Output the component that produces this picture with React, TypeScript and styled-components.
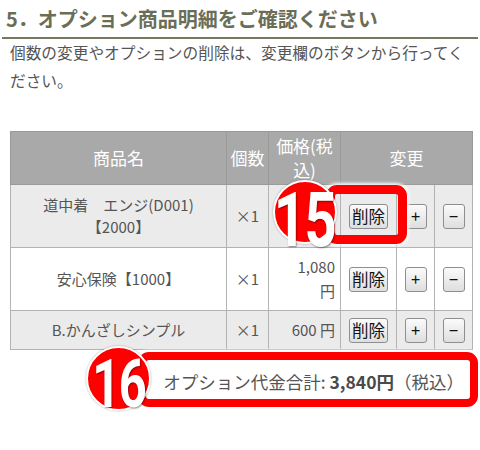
import React from "react";
import styled, { createGlobalStyle } from "styled-components";

const Global = createGlobalStyle`
  html, body { margin: 0; padding: 0; background: #fff; }
  body { font-family: "Noto Sans CJK JP", "Noto Sans", sans-serif; color: #555; }
`;

const Page = styled.div`
  position: relative;
  width: 480px;
  height: 450px;
  overflow: hidden;
`;

const Heading = styled.h2`
  margin: 0 2px;
  padding: 6px 0 5px 4px;
  font-size: 20px;
  line-height: 26px;
  font-weight: 700;
  color: #6b6e56;
  border-bottom: 2px solid #77795f;
`;

const Lead = styled.p`
  margin: 0 10px;
  font-size: 15.7px;
  line-height: 28px;
  color: #555;
`;

const Table = styled.table`
  margin: 36px 0 0 10px;
  width: 462px;
  border-collapse: collapse;
  table-layout: fixed;
  font-size: 15px;
  color: #555;
`;

const Col = styled.col<{ $w: number }>`
  width: ${(p) => p.$w}px;
`;

const Row = styled.tr<{ $h: number; $shade?: boolean }>`
  height: ${(p) => p.$h}px;
  background: ${(p) => (p.$shade ? "#ebebeb" : "#fff")};
`;

const Th = styled.th`
  background: #a9a9a9;
  color: #fff;
  font-weight: 400;
  font-size: 17px;
  line-height: 24px;
  border: 1px solid #9a9a9a;
  padding: 2px 0;
  text-align: center;
`;

const Td = styled.td<{ $align?: "center" | "right"; $lh?: number }>`
  border: 1px solid #b3b3b3;
  padding: 4px ${(p) => (p.$align === "right" ? 5 : 2)}px;
  text-align: ${(p) => p.$align || "center"};
  line-height: ${(p) => p.$lh || 22}px;
  vertical-align: middle;
`;

const Btn = styled.button`
  font-family: "Noto Sans CJK JP", sans-serif;
  font-size: 16.5px;
  line-height: 23px;
  color: #111;
  padding: 0 2px;
  min-width: 22px;
  white-space: nowrap;
  border: 1px solid #8e8e8e;
  border-radius: 3px;
  background: linear-gradient(#fbfbfb, #dedede);
  cursor: pointer;
`;

const Total = styled.div`
  margin-top: 20px;
  padding-right: 16px;
  text-align: right;
  font-size: 17.5px;
  line-height: 24px;
  color: #555;
  strong { font-weight: 700; color: #4a4a4a; }
`;

const Frame = styled.div<{ $x: number; $y: number; $w: number; $h: number; $b: number }>`
  position: absolute;
  left: ${(p) => p.$x}px;
  top: ${(p) => p.$y}px;
  width: ${(p) => p.$w}px;
  height: ${(p) => p.$h}px;
  box-sizing: border-box;
  border: ${(p) => p.$b}px solid #ff0000;
  border-radius: 11px;
  box-shadow: 0 0 3px 2px rgba(255, 255, 255, 0.9);
  pointer-events: none;
`;

const Badge = styled.div<{ $x: number; $y: number; $d: number; $fs: number }>`
  position: absolute;
  left: ${(p) => p.$x}px;
  top: ${(p) => p.$y}px;
  width: ${(p) => p.$d}px;
  height: ${(p) => p.$d}px;
  box-sizing: border-box;
  border-radius: 50%;
  background: #ff0000;
  border: 2px solid #fff;
  box-shadow: 0 0 2px rgba(0, 0, 0, 0.35);
  display: flex;
  align-items: center;
  justify-content: center;
  span {
    display: block;
    font-family: Roboto, "Liberation Sans", sans-serif;
    font-weight: 700;
    font-size: ${(p) => p.$fs}px;
    line-height: 0.74;
    color: #fff;
    letter-spacing: -2px;
    transform: scaleX(0.74) translateY(${(p) => Math.round(p.$fs * 0.1)}px);
    text-shadow: 1px 1px 2px rgba(0, 0, 0, 0.45);
  }
`;

export default function App() {
  return (
    <>
      <Global />
      <Page>
        <Heading>5．オプション商品明細をご確認ください</Heading>
        <Lead>個数の変更やオプションの削除は、変更欄のボタンから行ってください。</Lead>
        <Table>
          <colgroup>
            <Col $w={216} />
            <Col $w={42} />
            <Col $w={72} />
            <Col $w={56} />
            <Col $w={38} />
            <Col $w={38} />
          </colgroup>
          <thead>
            <Row $h={53}>
              <Th>商品名</Th>
              <Th>個数</Th>
              <Th>価格(税込)</Th>
              <Th colSpan={3}>変更</Th>
            </Row>
          </thead>
          <tbody>
            <Row $h={63} $shade>
              <Td>道中着　エンジ(D001)<br />【2000】</Td>
              <Td>×1</Td>
              <Td $align="right" $lh={24} />
              <Td><Btn>削除</Btn></Td>
              <Td><Btn>+</Btn></Td>
              <Td><Btn>−</Btn></Td>
            </Row>
            <Row $h={63}>
              <Td>安心保険【1000】</Td>
              <Td>×1</Td>
              <Td $align="right" $lh={24}>1,080<br />円</Td>
              <Td><Btn>削除</Btn></Td>
              <Td><Btn>+</Btn></Td>
              <Td><Btn>−</Btn></Td>
            </Row>
            <Row $h={39} $shade>
              <Td>B.かんざしシンプル</Td>
              <Td>×1</Td>
              <Td $align="right">600 円</Td>
              <Td><Btn>削除</Btn></Td>
              <Td><Btn>+</Btn></Td>
              <Td><Btn>−</Btn></Td>
            </Row>
          </tbody>
        </Table>
        <Total>
          オプション代金合計: <strong>3,840円</strong>（税込）
        </Total>

        <Frame $x={326} $y={185} $w={81} $h={59} $b={9} />
        <Badge $x={273} $y={180} $d={64} $fs={76}><span>15</span></Badge>

        <Frame $x={138} $y={352} $w={340} $h={55} $b={8} />
        <Badge $x={86} $y={346} $d={65} $fs={66}><span>16</span></Badge>
      </Page>
    </>
  );
}
